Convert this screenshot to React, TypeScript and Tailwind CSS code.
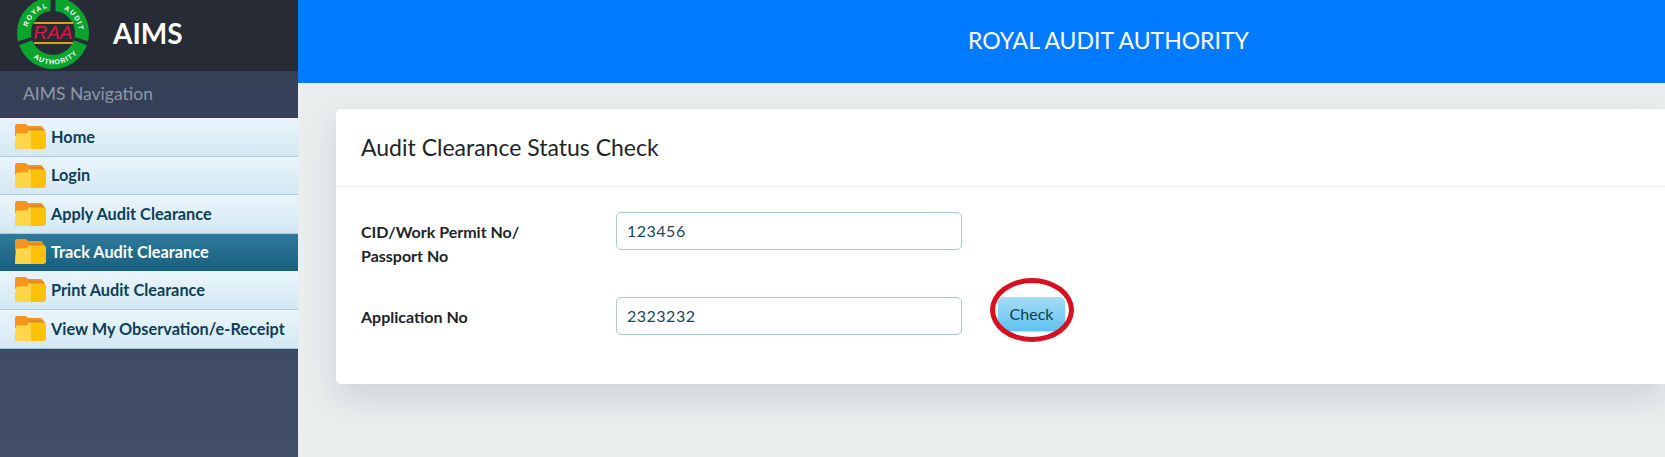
const menu = [
  { label: "Home", h: "h-[39px]" },
  { label: "Login", h: "h-[38px]" },
  { label: "Apply Audit Clearance", h: "h-[39px]" },
  { label: "Track Audit Clearance", h: "h-[37px]", active: true },
  { label: "Print Audit Clearance", h: "h-[39px]" },
  { label: "View My Observation/e-Receipt", h: "h-[39px]" },
];

function FolderIcon() {
  return (
    <svg width="31" height="26" viewBox="0 0 31 26" className="shrink-0">
      <path d="M0 2 Q0 0 2 0 H10 Q12 0 13 2 H25 Q28 2 28 5 V12 H0 Z" fill="#f7941d" />
      <path d="M14 4 H27 Q29 4 30 7 V10 H14 Z" fill="#dd8a2c" />
      <path d="M1 11 Q1 9.5 3 9.5 H11 Q13 9.5 14 6.5 H28 Q31 6.5 31 9 V22 Q31 25 28 25 H1 Q0 25 0 24 Z" fill="#ffc107" />
      <path d="M1 11 Q1 9.5 3 9.5 H11 Q13 9.5 14 6.5 H16 V25 H1 Q0 25 0 24 Z" fill="#ffd54a" />
    </svg>
  );
}

function Logo() {
  return (
    <svg width="72" height="72" viewBox="0 0 72 72" className="shrink-0">
      <defs>
        <path id="arcRoyal" d="M10 34 A26 26 0 0 1 32 7.5" />
        <path id="arcAudit" d="M40 7.5 A26 26 0 0 1 62 34" />
        <path id="arcAuth" d="M7 46 A32 32 0 0 0 65 46" />
      </defs>
      <circle cx="36" cy="33" r="29" fill="#262b36" stroke="#0aa52d" strokeWidth="14" />
      <rect x="33.5" y="-2" width="5" height="16" fill="#262b36" />
      <path d="M-2 42 L15 37 L16 40 L0 46 Z" fill="#262b36" />
      <path d="M74 42 L57 37 L56 40 L72 46 Z" fill="#262b36" />
      <text fontFamily="Liberation Sans, sans-serif" fontSize="7" fontWeight="700" fill="#fff" letterSpacing="1.2">
        <textPath href="#arcRoyal" startOffset="7">ROYAL</textPath>
      </text>
      <text fontFamily="Liberation Sans, sans-serif" fontSize="7" fontWeight="700" fill="#fff" letterSpacing="1.2">
        <textPath href="#arcAudit" startOffset="7">AUDIT</textPath>
      </text>
      <text fontFamily="Liberation Sans, sans-serif" fontSize="7" fontWeight="700" fill="#fff" letterSpacing="0.9">
        <textPath href="#arcAuth" startOffset="15">AUTHORITY</textPath>
      </text>
      <rect x="17" y="22" width="39" height="2" fill="#d9a21b" />
      <rect x="17" y="42" width="39" height="2" fill="#d9a21b" />
      <text x="36" y="39" textAnchor="middle" fontFamily="Liberation Sans, sans-serif" fontSize="19" fontStyle="italic" fill="#e0173f">
        RAA
      </text>
    </svg>
  );
}

function Field({ label, value }: { label: React.ReactNode; value: string }) {
  return (
    <div className="flex items-start">
      <label className="w-[255px] pt-[8px] text-[16px] font-bold leading-6 text-[#212529]">{label}</label>
      <input
        readOnly
        value={value}
        className="h-[38px] w-[346px] rounded-[5px] border border-[#a9c9d6] bg-white px-[10px] pb-[2px] text-[16px] tracking-[0.5px] text-[#1d4560] outline-none"
      />
    </div>
  );
}

export default function App() {
  return (
    <div className="flex h-[457px] w-[1665px] overflow-hidden bg-[#eaeeef] font-['Lato','Noto_Sans',sans-serif]">
      <aside className="flex w-[298px] shrink-0 flex-col bg-gradient-to-b from-[#323c53] to-[#434f69]">
        <div className="flex h-[71px] items-center gap-6 bg-[#262b36] pl-[17px]">
          <Logo />
          <span className="mb-[5px] text-[28px] font-bold text-white">AIMS</span>
        </div>
        <div className="flex h-[46px] items-center pl-[23px] text-[17.5px] text-[#8f97a5]">AIMS Navigation</div>
        <nav className="flex flex-col border-y border-[#1d4a60]">
          {menu.map((item) => (
            <a
              key={item.label}
              className={`flex items-center gap-[5px] border-b pl-[15px] text-[16.3px] font-bold ${item.h} ${
                item.active
                  ? "border-[#1f5f80] bg-gradient-to-b from-[#2f7a9c] to-[#17607f] text-white"
                  : "border-[#a9cde0] bg-gradient-to-b from-[#eaf5fb] to-[#d3e8f3] text-[#0d3f57]"
              }`}
            >
              <FolderIcon />
              {item.label}
            </a>
          ))}
        </nav>
      </aside>
      <div className="flex min-w-0 flex-1 flex-col">
        <header className="flex h-[83px] items-center justify-center bg-[#007bff] pb-[2px] pl-[254px] text-[23px] text-white">
          ROYAL AUDIT AUTHORITY
        </header>
        <main className="pl-[38px] pt-[26px]">
          <section className="h-[275px] rounded-l-[5px] bg-white shadow-[0_14px_34px_rgba(60,70,80,0.16)]">
            <div className="flex h-[78px] items-center border-b border-[#eceff1] pl-[25px] text-[23px] text-[#212529]">
              Audit Clearance Status Check
            </div>
            <div className="relative flex flex-col gap-[29px] pl-[25px] pt-[25px]">
              <Field
                label={
                  <>
                    CID/Work Permit No/
                    <br />
                    Passport No
                  </>
                }
                value="123456"
              />
              <div className="flex items-start">
                <Field label="Application No" value="2323232" />
                <button className="ml-[36px] h-[34px] w-[67px] rounded-[5px] bg-gradient-to-b from-[#a5dcf5] to-[#5fc3f0] text-[16px] text-[#0f3d58] shadow-[0_1px_2px_rgba(0,0,0,0.2)]">
                  Check
                </button>
              </div>
              {/* red annotation ring drawn over the button */}
              <div className="absolute left-[654px] top-[91px] h-[64px] w-[84px] rounded-[50%] border-[5px] border-[#d8101f]" />
            </div>
          </section>
        </main>
      </div>
    </div>
  );
}
